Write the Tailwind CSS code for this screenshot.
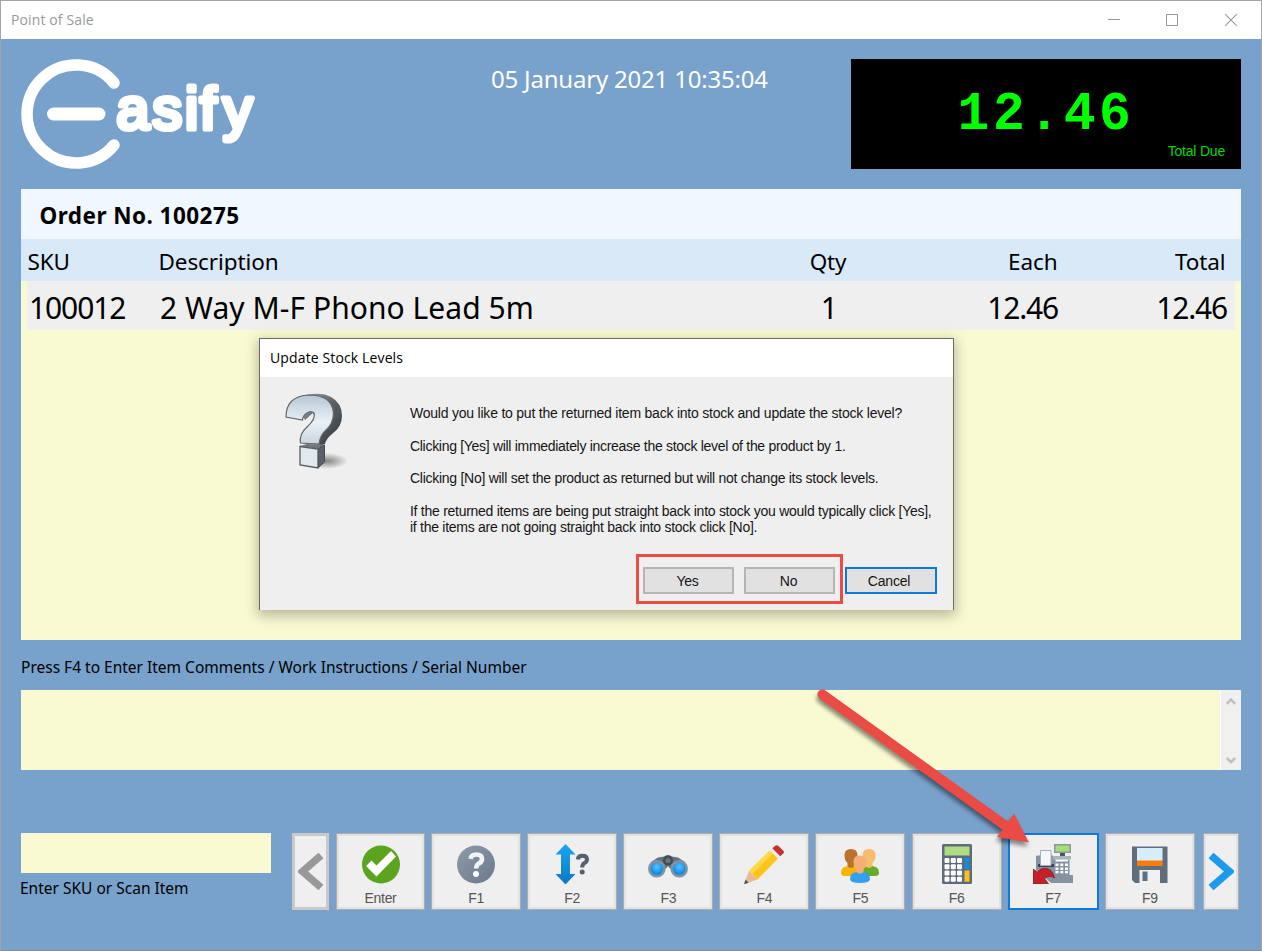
<!DOCTYPE html>
<html lang="en">
<head>
<meta charset="utf-8">
<title>Point of Sale</title>
<script src="https://cdn.jsdelivr.net/npm/@tailwindcss/browser@4"></script>
</head>
<body class="w-[1262px] h-[951px] overflow-hidden">
<div class="relative flex flex-col w-[1262px] h-[951px] border border-[#a4a4a4] border-b-[#8a8a8a] bg-[#78a1cb] text-black font-['Noto_Sans','Open_Sans',sans-serif]">
  <header class="flex h-[38px] shrink-0 items-center justify-between bg-white pl-[10px] pr-[24px]">
    <span class="text-[14px] leading-none text-[#999] tracking-[0.12px] font-['Open_Sans',sans-serif] whitespace-nowrap">Point of Sale</span>
    <div class="flex items-center gap-[46px]">
      <svg width="12" height="12" viewBox="0 0 12 12"><path d="M0 5.5H12" stroke="#999"/></svg>
      <svg width="12" height="12" viewBox="0 0 12 12"><rect x=".5" y=".5" width="11" height="11" fill="none" stroke="#999"/></svg>
      <svg class="ml-px" width="12" height="12" viewBox="0 0 12 12"><path d="M0 0L12 12M12 0L0 12" stroke="#999" stroke-width="1.1"/></svg>
    </div>
  </header>

  <section class="flex h-[150px] shrink-0 pl-5 pr-5 pt-[20px]">
    <svg class="w-[470px] shrink-0" height="112" viewBox="0 0 470 112">
      <path d="M93 24 A49 49 0 1 0 93 86" fill="none" stroke="#fff" stroke-width="11.500" stroke-linecap="round"/>
      <path d="M32.500 55H78" stroke="#fff" stroke-width="13" stroke-linecap="round"/>
      <text x="95.500 131.500 164 179 202" y="69.500" font-family="Liberation Sans, sans-serif" font-size="59" fill="#fff" stroke="#fff" stroke-width="5.200" stroke-linejoin="round">asify</text>
    </svg>
    <div class="w-[360px] shrink-0 pt-[5px] text-[24px] leading-[30px] text-white tracking-[-0.2px] whitespace-nowrap">05 January 2021 10:35:04</div>
    <div class="flex h-[110px] w-[390px] flex-col items-end bg-black text-[#00ff00]">
      <div class="h-[84px] w-full pt-[26px] text-center font-['Liberation_Mono',monospace] text-[53px] font-bold leading-[60px] tracking-[3.600px] whitespace-nowrap">12.46</div>
      <div class="pr-[16px] text-[14px] leading-[16px] text-[#00d800] font-['Liberation_Sans',sans-serif] whitespace-nowrap tracking-[-0.2px]">Total Due</div>
    </div>
  </section>

  <section class="mx-5 flex h-[451px] shrink-0 flex-col bg-[#fafad2]">
    <div class="h-[50px] shrink-0 bg-[#f0f7ff] pl-[18.5px] text-[22.500px] font-bold leading-[53px] tracking-[0.460px] whitespace-nowrap">Order No. 100275</div>
    <div class="flex h-[42px] shrink-0 bg-[#dae9f8] pl-[6.5px] pr-[15px] text-[22.500px] leading-[46px] tracking-[-0.1px]">
      <span class="w-[131px]">SKU</span><span class="w-[604px]">Description</span><span class="w-[84px] text-right">Qty</span><span class="w-[211px] text-right">Each</span><span class="w-[168px] text-right">Total</span>
    </div>
    <div class="mx-[6px] flex h-[49px] shrink-0 bg-[#efefef] pl-[2px] pr-[8px] text-[30px] leading-[53px] whitespace-nowrap">
      <span class="w-[131px] tracking-[-1.100px]">100012</span><span class="w-[604px] tracking-[0.050px]">2 Way M-F Phono Lead 5m</span><span class="w-[74px] text-right">1</span><span class="w-[220px] text-right tracking-[-1.200px]">12.46</span><span class="w-[169px] text-right tracking-[-1.200px]">12.46</span>
    </div>
  </section>

  <div class="mx-5 h-[50px] shrink-0 text-[15.5px] leading-[55px] whitespace-nowrap">Press F4 to Enter Item Comments / Work Instructions / Serial Number</div>
  <section class="mx-5 flex h-[80px] shrink-0 justify-end bg-[#fafad2]">
    <div class="flex w-[21px] flex-col items-center justify-between border-l border-white bg-[#f0f0f0] pb-[5px] pr-[1px] pt-[7px]">
      <svg width="10" height="9" viewBox="0 0 10 9"><path d="M.8 6.8L5 2.6L9.2 6.8" fill="none" stroke="#bfbfbf" stroke-width="2.5"/></svg>
      <svg width="10" height="9" viewBox="0 0 10 9"><path d="M.8 2L5 6.2L9.2 2" fill="none" stroke="#bfbfbf" stroke-width="2.5"/></svg>
    </div>
  </section>

  <footer class="flex shrink-0 pl-5 pt-[63px]">
    <div class="w-[271px]">
      <div class="h-[40px] w-[250px] bg-[#fafad2]"></div>
      <div class="-ml-px text-[15.5px] leading-[30px] whitespace-nowrap">Enter SKU or Scan Item</div>
    </div>
    <div class="flex text-[14px] tracking-[-0.300px] text-[#555] font-['Liberation_Sans',sans-serif]">
      <button class="mr-[7px] flex h-[77px] w-[37px] items-center justify-center border-[3px] border-[#c9c9c9] bg-[#efefef]">
        <svg width="26" height="38" viewBox="0 0 26 38"><path d="M23 2.500L4.500 18.500L23 34.500" fill="none" stroke="#999" stroke-width="7.500"/></svg>
      </button>
      <div class="flex gap-[6.1px]">
        <button class="flex h-[77px] w-[89px] flex-col items-center border border-[#adadad] bg-[#efefef] pt-[10px] shadow-[inset_0_0_0_2px_#e1e1e1]">
          <svg width="40" height="40" viewBox="0 0 40 40"><circle cx="20" cy="20.500" r="19" fill="#5ba41f"/><path d="M5 22L10.500 16.500L15.500 21.500L30 7L35 12.500L15.500 32.500Z" fill="#fff"/></svg>
          <span class="pt-[5px] leading-[18px]">Enter</span>
        </button>
        <button class="flex h-[77px] w-[90px] flex-col items-center border border-[#adadad] bg-[#efefef] pt-[10px] shadow-[inset_0_0_0_2px_#e1e1e1]">
          <svg width="40" height="40" viewBox="0 0 40 40"><defs><linearGradient id="gq" x1="0" y1="0" x2="1" y2="1"><stop offset="0" stop-color="#8d9aaa"/><stop offset="1" stop-color="#6b798a"/></linearGradient></defs><circle cx="20" cy="20.500" r="19" fill="url(#gq)"/><path d="M14.500 14.800Q15.200 10.500 20.300 10.500Q26 10.500 26 15Q26 18 22.800 19.500Q20.300 20.800 20.200 24.500" fill="none" stroke="#f2f5f8" stroke-width="4.600"/><circle cx="20" cy="30" r="3" fill="#fff"/></svg>
          <span class="pt-[5px] leading-[18px]">F1</span>
        </button>
        <button class="flex h-[77px] w-[90px] flex-col items-center border border-[#adadad] bg-[#efefef] pt-[10px] shadow-[inset_0_0_0_2px_#e1e1e1]">
          <svg width="40" height="40" viewBox="0 0 40 40"><defs><linearGradient id="gb" x1="0" y1="0" x2="0" y2="1"><stop offset="0" stop-color="#1ba6f5"/><stop offset="1" stop-color="#0d78bf"/></linearGradient></defs><path d="M13.500 0L23.500 10.500H18V30H23.500L13.500 40.500L3.500 30H9V10.500H3.500Z" fill="url(#gb)"/><path d="M25.800 15.500Q26.200 11.800 30.500 11.800Q35 11.800 35 15.500Q35 17.600 32.500 19Q30.200 20.300 30.200 23.500" fill="none" stroke="#556170" stroke-width="4"/><circle cx="30.200" cy="28" r="2.500" fill="#556170"/></svg>
          <span class="pt-[5px] leading-[18px]">F2</span>
        </button>
        <button class="flex h-[77px] w-[90px] flex-col items-center border border-[#adadad] bg-[#efefef] pt-[10px] shadow-[inset_0_0_0_2px_#e1e1e1]">
          <svg width="40" height="40" viewBox="0 0 40 40"><defs><radialGradient id="lens" cx=".5" cy=".35"><stop offset="0" stop-color="#5cc3ff"/><stop offset="1" stop-color="#1090ea"/></radialGradient></defs><path d="M3 18L10 13.500L16 12.500Q20 9.500 24 12.500L30 13.500L37 18L33 27H26L21.500 24L20 22L18.500 24L14 27H7Z" fill="#66727f"/><circle cx="8.800" cy="24.800" r="8.800" fill="#8592a0"/><circle cx="31.200" cy="24.800" r="8.800" fill="#8592a0"/><circle cx="8.800" cy="24.800" r="6.300" fill="url(#lens)"/><circle cx="31.200" cy="24.800" r="6.300" fill="url(#lens)"/><circle cx="20" cy="16.500" r="5" fill="#414b56"/><circle cx="20" cy="16.500" r="2.600" fill="#6b7783"/></svg>
          <span class="pt-[5px] leading-[18px]">F3</span>
        </button>
        <button class="flex h-[77px] w-[90px] flex-col items-center border border-[#adadad] bg-[#efefef] pt-[10px] shadow-[inset_0_0_0_2px_#e1e1e1]">
          <svg width="40" height="40" viewBox="0 0 40 40"><path d="M5 27L13.500 35.500L0 40Z" fill="#e9bb94"/><path d="M1.500 35.500L4.700 38.700L0 40.300Z" fill="#4b5563"/><path d="M5 27L26 6.500L34 14.500L13.500 35.500Z" fill="#fdc51c"/><path d="M5 27L26 6.500L29 9.500L8 30Z" fill="#ffd948"/><path d="M26 6.500L28.300 4.200L36.200 12.200L34 14.500Z" fill="#eceff2"/><path d="M28.300 4.200L31.500 1.500Q33 .8 34.500 2L39.500 7Q40.500 8 39.500 9.200L36.200 12.200Z" fill="#c9322c"/></svg>
          <span class="pt-[5px] leading-[18px]">F4</span>
        </button>
        <button class="flex h-[77px] w-[90px] flex-col items-center border border-[#adadad] bg-[#efefef] pt-[10px] shadow-[inset_0_0_0_2px_#e1e1e1]">
          <svg width="40" height="40" viewBox="0 0 40 40"><path d="M1 29Q1 22.500 8 22L20 23V32H5Q1 32 1 29Z" fill="#f9b300"/><path d="M39 29Q39 22.500 32 22L20 23V32H35Q39 32 39 29Z" fill="#65ac2b"/><path d="M4.500 11Q4.500 5 11 5Q17.500 5 17.500 11Q17.500 16.500 14.500 19V22Q11 26 7.500 22V19Q4.500 16.500 4.500 11Z" fill="#bb732c"/><path d="M22.500 11Q22.500 5 29 5Q35.500 5 35.500 11Q35.500 16.500 32.500 19V22Q29 26 25.500 22V19Q22.500 16.500 22.500 11Z" fill="#f6bd6c"/><path d="M10 35Q10 28.500 17 28H23Q30 28.500 30 35Q30 39 20 39Q10 39 10 35Z" fill="#33a1f0"/><path d="M13.500 17.500Q13.500 11.500 20 11.500Q26.500 11.500 26.500 17.500Q26.500 22.500 23.500 25.500V28Q20 31 16.500 28V25.500Q13.500 22.500 13.500 17.500Z" fill="#f5ae74"/></svg>
          <span class="pt-[5px] leading-[18px]">F5</span>
        </button>
        <button class="flex h-[77px] w-[90px] flex-col items-center border border-[#adadad] bg-[#efefef] pt-[10px] shadow-[inset_0_0_0_2px_#e1e1e1]">
          <svg width="40" height="40" viewBox="0 0 40 40"><rect x="5" y="0" width="30" height="40" rx="1.500" fill="#5d6b7b"/><rect x="7.500" y="2.500" width="25" height="9" fill="#b2dc84"/><g fill="#fff"><rect x="7.500" y="14" width="5" height="5" rx="1"/><rect x="13.800" y="14" width="5" height="5" rx="1"/><rect x="20" y="14" width="5" height="5" rx="1"/><rect x="7.500" y="20.200" width="5" height="5" rx="1"/><rect x="13.800" y="20.200" width="5" height="5" rx="1"/><rect x="20" y="20.200" width="5" height="5" rx="1"/><rect x="7.500" y="26.500" width="5" height="5" rx="1"/><rect x="13.800" y="26.500" width="5" height="5" rx="1"/><rect x="20" y="26.500" width="5" height="5" rx="1"/><rect x="7.500" y="32.700" width="5" height="5" rx="1"/><rect x="13.800" y="32.700" width="5" height="5" rx="1"/><rect x="20" y="32.700" width="5" height="5" rx="1"/></g><rect x="27.500" y="14" width="5" height="5" fill="#0c8ee6"/><rect x="27.500" y="20.200" width="5" height="5" fill="#0c8ee6"/><rect x="27.500" y="26.500" width="5" height="11.200" fill="#fbc01f"/></svg>
          <span class="pt-[5px] leading-[18px]">F6</span>
        </button>
        <button class="flex h-[77px] w-[91px] flex-col items-center border-[2.5px] border-[#0b7bdb] bg-[#efefef] pt-[9px]">
          <svg width="40" height="40" viewBox="0 0 40 40"><path d="M3 13Q3 11.500 4.500 11.500H20V15H34.500Q36.500 15 36.500 17V31H40V39H18L3 26Z" fill="#8592a2"/><rect x="21" y="0" width="17" height="9" fill="#8b97a5"/><rect x="22.500" y="1.500" width="14" height="6" fill="#a5dc74"/><rect x="27" y="9" width="5" height="3" fill="#4b5663"/><rect x="20" y="12" width="18" height="3.500" fill="#aab4bf"/><rect x="5" y="20" width="16" height="3" fill="#39434f"/><path d="M7.500 6.500H18V21.500H7.500Z" fill="#f3f7fb" stroke="#a3b0bf"/><rect x="22.500" y="15.500" width="12.500" height="2" fill="#fff"/><g fill="#fff"><rect x="22.500" y="19.500" width="3" height="2.500"/><rect x="27.300" y="19.500" width="3" height="2.500"/><rect x="32" y="19.500" width="3" height="2.500"/><rect x="22.500" y="23.500" width="3" height="2.500"/><rect x="27.300" y="23.500" width="3" height="2.500"/><rect x="32" y="23.500" width="3" height="2.500"/><rect x="22.500" y="27" width="3" height="2.300"/><rect x="27.300" y="27" width="3" height="2.300"/><rect x="32" y="27" width="3" height="2.300"/></g><path d="M0 25L4.500 28Q8 23.500 14 24.500Q20 26 21.500 34Q17 30.500 11.500 34.500L15.500 39.500L0 40.300Z" fill="#c4202a" stroke="#8d1a20" stroke-width=".8"/></svg>
          <span class="pt-[5px] leading-[18px]">F7</span>
        </button>
        <button class="flex h-[77px] w-[90px] flex-col items-center border border-[#adadad] bg-[#efefef] pt-[10px] shadow-[inset_0_0_0_2px_#e1e1e1]">
          <svg width="40" height="40" viewBox="0 0 40 40"><path d="M2 2.500H37.500V39H5L2 36Z" fill="#5f6d7d"/><rect x="7" y="4" width="25.500" height="13" fill="#d7edfb"/><rect x="7" y="16.500" width="25.500" height="5.500" fill="#f77d0a"/><rect x="9.500" y="26" width="20.500" height="13" fill="#eef0f2"/><rect x="12.500" y="27.500" width="5" height="9.500" fill="#5f6d7d"/></svg>
          <span class="pt-[5px] leading-[18px]">F9</span>
        </button>
      </div>
      <button class="ml-[8.5px] flex h-[77px] w-[36px] items-center justify-center border border-[#adadad] bg-[#efefef] shadow-[inset_0_0_0_2px_#e1e1e1]">
        <svg width="26" height="38" viewBox="0 0 26 38"><path d="M3 2.500L21.500 18.500L3 34.500" fill="none" stroke="#1c9bee" stroke-width="7.500"/></svg>
      </button>
    </div>
  </footer>

  <div role="dialog" class="absolute left-[258px] top-[337px] flex h-[272px] w-[695px] flex-col border border-b-0 border-[#6d6d5c] bg-[#efefef] shadow-[0_4px_12px_2px_rgba(0,0,0,0.25)]">
    <div class="h-[38px] shrink-0 bg-white pl-[10px] text-[14px] leading-[38px] tracking-[0.130px] font-['Open_Sans',sans-serif] whitespace-nowrap">Update Stock Levels</div>
    <div class="flex h-[187px] shrink-0">
      <div class="w-[150px] shrink-0 pl-[25px] pt-[16px]">
        <svg width="66" height="80" viewBox="0 0 66 80">
          <defs>
            <linearGradient id="qf" x1="0" y1="0" x2="0" y2="1"><stop offset="0" stop-color="#b6c6d4"/><stop offset=".55" stop-color="#eaf1f7"/><stop offset="1" stop-color="#cbd5de"/></linearGradient>
            <linearGradient id="qs" x1="0" y1="0" x2="1" y2="1"><stop offset="0" stop-color="#aaa"/><stop offset=".5" stop-color="#5b5f64"/><stop offset="1" stop-color="#34383d"/></linearGradient>
            <radialGradient id="sh"><stop offset="0" stop-color="#000" stop-opacity=".45"/><stop offset="1" stop-color="#000" stop-opacity="0"/></radialGradient>
          </defs>
          <ellipse cx="42" cy="68" rx="21" ry="8" fill="url(#sh)"/>
          <path d="M22 1.500Q38 -1 46 4Q57 10 57 23Q57 34 47 41Q41 46 40 51L37 52L17 50L24 35Q32 26 28 20L20 27Q8 10 22 1.500Z" fill="url(#qs)"/>
          <path d="M1 24Q1 3 24 2Q47 2 48.500 20Q48.500 31 40 38Q35 43 34 51L15.500 50Q14 41 22 34Q31 26 29 20Q26 17 22 20Q18 22 17.500 27Z" fill="url(#qf)" stroke="#60656a" stroke-width="1.200"/>
          <path d="M15 53L22 51L39.500 52L33 56Z" fill="#70767c"/>
          <path d="M33 56L39.500 52V69L33 75Z" fill="#596069" stroke="#44494f"/>
          <path d="M15 53.500L33 56V75L15 72Z" fill="#e1e8ee" stroke="#555b61" stroke-width="1.300"/>
        </svg>
      </div>
      <div class="pt-[28px] font-['Liberation_Sans',sans-serif] text-[14px] leading-[16.300px] text-[#151515] tracking-[-0.270px] whitespace-nowrap">
        <p class="mb-[16.300px] tracking-[-0.220px]">Would you like to put the returned item back into stock and update the stock level?</p>
        <p class="mb-[16.300px] tracking-[-0.300px]">Clicking [Yes] will immediately increase the stock level of the product by 1.</p>
        <p class="mb-[16.300px]">Clicking [No] will set the product as returned but will not change its stock levels.</p>
        <p>If the returned items are being put straight back into stock you would typically click [Yes],<br>if the items are not going straight back into stock click [No].</p>
      </div>
    </div>
    <div class="relative flex gap-[10px] pl-[383px] pt-[3px] font-['Liberation_Sans',sans-serif] text-[14px] leading-none tracking-[-0.200px] text-[#151515]">
      <button class="h-[27px] w-[91px] border-2 border-[#b5b5b5] bg-[#e1e1e1] pr-[2px]">Yes</button>
      <button class="h-[27px] w-[91px] border-2 border-[#b5b5b5] bg-[#e1e1e1] pr-[2px]">No</button>
      <button class="h-[27px] w-[92px] border-2 border-[#0b7bdb] bg-[#e1e1e1] pr-[4px]">Cancel</button>
      <div class="absolute left-[376px] top-[-10px] h-[50px] w-[207px] border-[3px] border-[#ec4c46]"></div>
    </div>
  </div>

  <svg class="absolute left-[810px] top-[679px] drop-shadow-[-1px_4px_2px_rgba(0,0,0,0.45)]" width="230" height="175" viewBox="811 680 230 175">
    <path d="M822.500 694.500L1010 829" stroke="#ea4b44" stroke-width="10" stroke-linecap="round"/>
    <path d="M1029 842.500L1014 813.500L997 837Z" fill="#ea4b44"/>
  </svg>
</div>
</body>
</html>
